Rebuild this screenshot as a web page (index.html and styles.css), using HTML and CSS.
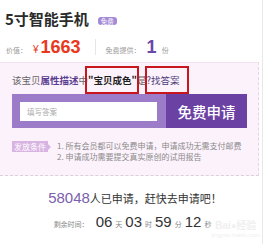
FILE: index.html
```html
<!DOCTYPE html>
<html lang="zh-CN">
<head>
<meta charset="utf-8">
<title>5寸智能手机</title>
<link rel="stylesheet" href="styles.css">
</head>
<body>
<div class="page">
  <div class="title"><span class="name">5寸智能手机</span><span class="badge">免费</span></div>
  <div class="price">
    <div class="cell"><span class="lbl">价值：</span><span class="yen">¥</span><span class="val">1663</span></div>
    <div class="sep"></div>
    <div class="cell"><span class="lbl">免费提供：</span><span class="num">1</span><span class="lbl">份</span></div>
  </div>
  <div class="ask">
    <p class="q">该宝贝<b class="attr">属性描述</b>中<span class="mark"><b class="key">"宝贝成色"</b></span>是<span class="mark find">?找答案</span></p>
    <div class="bar">
      <div class="field"><input class="input" type="text" placeholder="填写答案"></div>
      <button class="apply" type="button">免费申请</button>
    </div>
    <div class="cond">
      <span class="tag">发放条件</span>
      <ol class="rules">
        <li>1. 所有会员都可以免费申请，申请成功无需支付邮费</li>
        <li>2. 申请成功需要提交真实原创的试用报告</li>
      </ol>
    </div>
  </div>
  <div class="stats"><span class="count">58048</span>人已申请，赶快去申请吧！</div>
  <div class="timer"><span class="tl">剩余时间：</span><span class="d">06</span><span class="u">天</span><span class="d">03</span><span class="u">时</span><span class="d">59</span><span class="u">分</span><span class="d">12</span><span class="u">秒</span></div>
  <div class="wm"><span class="wm-logo">Bai<span class="wm-paw">●</span>经验</span><span class="wm-url">jingyan.baidu.com</span></div>
</div>
</body>
</html>
```

FILE: styles.css
```css
html, body {
  margin: 0;
  padding: 0;
  background: #fff;
}
body {
  font-family: "Liberation Sans", "Noto Sans CJK SC", sans-serif;
  color: #333;
}
.page {
  position: relative;
  width: 262px;
  height: 244px;
  border-right: 1px solid #e8e8e8;
  overflow: hidden;
}
.title {
  display: flex;
  align-items: center;
  padding: 4px 0 0 5px;
  box-sizing: border-box;
  height: 34px;
}
.name {
  font-family: "Noto Sans CJK SC", sans-serif;
  font-size: 15px;
  font-weight: 700;
  color: #2b2b2b;
  line-height: 20px;
}
.badge {
  margin: 4px 0 0 9px;
  background: #a48ad6;
  color: #fff;
  font-family: "Noto Sans CJK SC", sans-serif;
  font-size: 6.5px;
  line-height: 8px;
  padding: 0 3px;
  border-radius: 3px;
}
.price {
  display: flex;
  align-items: center;
  height: 26px;
  padding-left: 6px;
}
.cell {
  display: flex;
  align-items: baseline;
}
.lbl {
  font-family: "Noto Sans CJK SC", sans-serif;
  font-size: 7px;
  color: #999;
}
.yen {
  margin-left: 6px;
  font-size: 10px;
  color: #e8391d;
}
.val {
  margin-left: 2px;
  font-size: 18px;
  font-weight: 700;
  color: #e8391d;
}
.sep {
  width: 1px;
  height: 16px;
  background: #e6e6e6;
  margin: 0 10px 0 14px;
}
.num {
  margin: 0 5px 0 6px;
  font-size: 18px;
  font-weight: 700;
  color: #6a48a8;
}
.ask {
  margin: 2px 3px 0 0;
  height: 114px;
  box-sizing: border-box;
  background: #fcf2fb;
  border-top: 1px solid #f1e4ef;
  border-right: 1px dashed #e4d4e4;
  border-bottom: 1px dashed #d9d0d9;
  padding-left: 12px;
}
.q {
  margin: 0;
  padding-top: 11px;
  line-height: 12px;
  font-family: "Noto Sans CJK SC", sans-serif;
  font-size: 9.5px;
  color: #666;
  white-space: nowrap;
}
.attr {
  color: #5a3d90;
}
.key {
  color: #1f1f1f;
}
.find {
  color: #4a3a78;
}
.mark {
  position: relative;
}
.mark::after {
  content: "";
  position: absolute;
  left: -3px;
  right: -2px;
  top: -7px;
  bottom: -7px;
  border: 2px solid #c9161e;
}
.find::after {
  left: -2px;
  right: -9px;
}
.bar {
  display: flex;
  width: 235px;
  height: 34px;
  margin-top: 8px;
  background: #9c7cc9;
}
.field {
  padding: 8px 9px 0 8px;
}
.input {
  display: block;
  box-sizing: border-box;
  width: 137px;
  height: 19px;
  border: 0;
  margin: 0;
  padding: 0 0 0 7px;
  background: #fff;
  font-family: "Noto Sans CJK SC", sans-serif;
  font-size: 7.5px;
  color: #333;
}
.input::placeholder {
  color: #aaa;
}
.apply {
  width: 81px;
  height: 34px;
  border: 0;
  margin: 0;
  padding: 0;
  background: #6b41a3;
  color: #fff;
  font-family: "Noto Sans CJK SC", sans-serif;
  font-size: 14.5px;
  font-weight: 500;
}
.cond {
  display: flex;
  align-items: flex-start;
  margin-top: 12px;
}
.tag {
  position: relative;
  margin-top: 1px;
  background: #d8b4e2;
  color: #fff;
  font-family: "Noto Sans CJK SC", sans-serif;
  font-size: 8px;
  line-height: 11px;
  height: 11px;
  padding: 0 2px;
}
.tag::after {
  content: "";
  position: absolute;
  right: -3px;
  top: 2.5px;
  border-top: 3px solid transparent;
  border-bottom: 3px solid transparent;
  border-left: 3px solid #d8b4e2;
}
.rules {
  list-style: none;
  margin: 0 0 0 9px;
  padding: 0;
  font-family: "Noto Sans CJK SC", sans-serif;
  font-size: 8px;
  line-height: 11px;
  color: #8a8a8a;
  white-space: nowrap;
}
.stats {
  margin-top: 12px;
  padding-left: 8px;
  text-align: center;
  line-height: 20px;
  font-family: "Noto Sans CJK SC", sans-serif;
  font-size: 11px;
  color: #333;
  white-space: nowrap;
}
.count {
  font-family: "Liberation Sans", sans-serif;
  font-size: 15px;
  color: #7b5fae;
}
.timer {
  margin-top: 4px;
  padding-left: 6px;
  display: flex;
  justify-content: center;
  align-items: baseline;
  line-height: 20px;
}
.tl, .u {
  font-family: "Noto Sans CJK SC", sans-serif;
  font-size: 7px;
  color: #888;
}
.tl {
  margin-right: 7px;
}
.u {
  margin: 0 3px;
}
.d {
  font-size: 15px;
  color: #333;
}
.wm {
  position: absolute;
  right: 2px;
  bottom: 6px;
  display: flex;
  flex-direction: column;
  align-items: center;
  color: #f0f0f0;
  font-family: "Liberation Sans", "Noto Sans CJK SC", sans-serif;
}
.wm-logo {
  font-size: 10px;
  font-weight: 700;
}
.wm-paw {
  font-size: 9px;
}
.wm-url {
  font-size: 6px;
}
```
